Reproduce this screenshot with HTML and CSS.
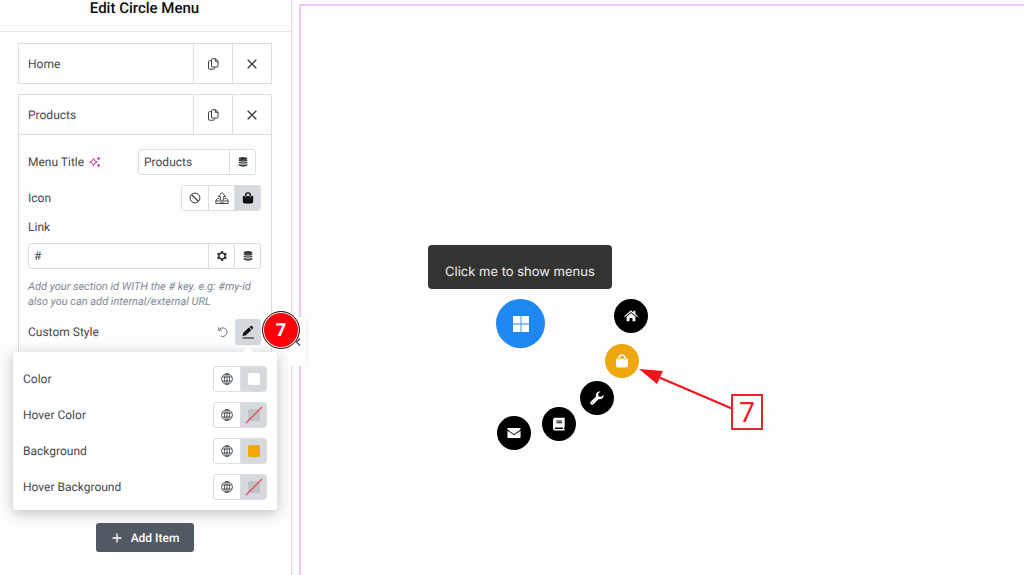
FILE: index.html
```html
<!DOCTYPE html>
<html lang="en">
<head>
<meta charset="utf-8">
<title>Edit Circle Menu</title>
<link rel="stylesheet" href="styles.css">
</head>
<body>
<svg class="defs" aria-hidden="true">
  <symbol id="copy" viewBox="0 0 12 12"><path d="M5.500.7h3L11 3v5a1 1 0 0 1-1 1H5.500a1 1 0 0 1-1-1V1.700a1 1 0 0 1 1-1zM8.300.8v2.500H11M4 2.700H2.500a1 1 0 0 0-1 1v6.500a1 1 0 0 0 1 1H6.500a1 1 0 0 0 1-1V9.400" fill="none" stroke="currentColor"/></symbol>
  <symbol id="close" viewBox="0 0 12 12"><path d="M1.700 1.700l8.600 8.600M10.300 1.700l-8.600 8.600" stroke="currentColor" stroke-width="1.400"/></symbol>
  <symbol id="database" viewBox="0 0 12 12"><ellipse cx="6" cy="2.400" rx="4.300" ry="1.500"/><path d="M1.700 3.500q4.300 1.500 8.600 0v1.400q-4.300 1.500-8.600 0zM1.700 5.700q4.300 1.500 8.600 0v1.400q-4.300 1.500-8.600 0zM1.700 7.900q4.300 1.500 8.600 0v1.700q-4.300 2.100-8.600 0z"/></symbol>
  <symbol id="gear" viewBox="0 0 12 12"><circle cx="6" cy="6" r="3" fill="none" stroke="currentColor" stroke-width="1.600"/><path d="M6 1v2M6 9v2M1.600 3.450l1.700 1M8.700 7.550l1.700 1M1.600 8.550l1.700-1M8.700 4.450l1.700-1" stroke="currentColor" stroke-width="2.200"/></symbol>
  <symbol id="globe" viewBox="0 0 12 12"><g fill="none" stroke="currentColor" stroke-width=".8"><circle cx="6" cy="6" r="5.400"/><ellipse cx="6" cy="6" rx="2.500" ry="5.400"/><path d="M6 .6v10.800M1.200 4h9.600M1.200 8h9.600"/></g></symbol>
  <symbol id="bag" viewBox="0 0 14 14"><path d="M4.200 5V3.800a2.800 2.800 0 0 1 5.600 0V5" fill="none" stroke="currentColor" stroke-width="1.600"/><path d="M1 4.700h2.600v1.500h1.200V4.700h4.400v1.500h1.200V4.700H13v6.800a2 2 0 0 1-2 2H3a2 2 0 0 1-2-2z"/></symbol>
</svg>
<div class="editor">
  <aside class="sidebar">
    <header class="header"><h1 class="title">Edit Circle Menu</h1></header>
    <div class="controls">
      <div class="item">
        <div class="item-bar">
          <button class="item-name">Home</button>
          <button class="item-tool" aria-label="Duplicate Home"><svg class="icon"><use href="#copy"/></svg></button>
          <button class="item-tool" aria-label="Remove Home"><svg class="icon"><use href="#close"/></svg></button>
        </div>
      </div>
      <div class="item">
        <div class="item-bar">
          <button class="item-name">Products</button>
          <button class="item-tool" aria-label="Duplicate Products"><svg class="icon"><use href="#copy"/></svg></button>
          <button class="item-tool" aria-label="Remove Products"><svg class="icon"><use href="#close"/></svg></button>
        </div>
        <div class="fields">
          <div class="row row-title">
            <label for="menu-title">Menu Title</label>
            <svg class="icon sparkle" viewBox="0 0 12 12"><path d="M4.500 2.300Q5.100 5.400 8.200 6 5.100 6.600 4.500 9.700 3.900 6.600.8 6 3.900 5.400 4.500 2.300z" fill="none" stroke="currentColor"/><path d="M9.600 1l.5 1.100 1.100.5-1.100.5-.5 1.100-.5-1.100L8 2.600l1.100-.5zM9.600 7.800l.5 1.100 1.100.5-1.100.5-.5 1.100-.5-1.100-1.100-.5 1.100-.5z" stroke="currentColor" stroke-width=".5"/></svg>
            <div class="group title-group">
              <input class="text" id="menu-title" type="text" value="Products">
              <button class="cell" aria-label="Dynamic title"><svg class="icon"><use href="#database"/></svg></button>
            </div>
          </div>
          <div class="row">
            <span>Icon</span>
            <div class="group push">
              <button class="cell" aria-label="No icon"><svg class="icon" viewBox="0 0 12 12"><path d="M2.500 2.500l7 7" stroke="currentColor" stroke-width="1.100"/><circle cx="6" cy="6" r="4.900" fill="none" stroke="currentColor"/></svg></button>
              <button class="cell" aria-label="Upload SVG"><svg class="icon icon-lg" viewBox="0 0 14 14"><path d="M5.300 9.300V5.500H3.400L7 1.500l3.600 4H8.700v3.800zM4.300 7.500H2.600L.9 9.200v3.300h12.200V9.200l-1.700-1.700H9.700M.9 9.900h3.400q.4 1.200 1.400 1.200h2.600q1 0 1.400-1.200h3.400" fill="none" stroke="currentColor" stroke-width=".9"/></svg></button>
              <button class="cell selected" aria-label="Icon library"><svg class="icon"><use href="#bag"/></svg></button>
            </div>
          </div>
          <label class="link-label" for="link">Link</label>
          <div class="group">
            <input class="text" id="link" type="text" value="#">
            <button class="cell" aria-label="Link options"><svg class="icon"><use href="#gear"/></svg></button>
            <button class="cell" aria-label="Dynamic link"><svg class="icon"><use href="#database"/></svg></button>
          </div>
          <p class="help">Add your section id WITH the # key. e.g: #my-id also you can add internal/external URL</p>
          <div class="row row-style">
            <span>Custom Style</span>
            <button class="reset" aria-label="Reset style"><svg class="icon" viewBox="0 0 12 12"><path d="M1.700 1.300v3h3M1.900 4.200A4.300 4.300 0 1 1 3.600 9.900" fill="none" stroke="currentColor"/></svg></button>
            <button class="edit" aria-label="Edit style"><svg class="icon icon-lg" viewBox="0 0 14 14"><path d="M1.500 11l.8-3.200L7.900 2.600l2.500 2.400-5.600 5.200zM8.600 1.900l.9-.8q.9-.6 1.600.1l.8.800q.7.700 0 1.500l-.9.8zM1.500 12.500h11.500v1H1.500z"/></svg></button>
            <span class="badge">7</span>
          </div>
          <div class="popover">
            <div class="row">
              <span>Color</span>
              <div class="group push"><button class="cell" aria-label="Global color"><svg class="icon"><use href="#globe"/></svg></button><button class="cell picker" aria-label="Pick color"><span class="swatch"></span></button></div>
            </div>
            <div class="row">
              <span>Hover Color</span>
              <div class="group push"><button class="cell" aria-label="Global hover color"><svg class="icon"><use href="#globe"/></svg></button><button class="cell picker" aria-label="Pick hover color"><svg class="unset" viewBox="0 0 20 20"><rect class="unset-box" x="4" y="4" width="12" height="12" rx="2"/><path class="unset-line" d="M2 18L18 2"/></svg></button></div>
            </div>
            <div class="row">
              <span>Background</span>
              <div class="group push"><button class="cell" aria-label="Global background"><svg class="icon"><use href="#globe"/></svg></button><button class="cell picker" aria-label="Pick background"><span class="swatch swatch-amber"></span></button></div>
            </div>
            <div class="row">
              <span>Hover Background</span>
              <div class="group push"><button class="cell" aria-label="Global hover background"><svg class="icon"><use href="#globe"/></svg></button><button class="cell picker" aria-label="Pick hover background"><svg class="unset" viewBox="0 0 20 20"><rect class="unset-box" x="4" y="4" width="12" height="12" rx="2"/><path class="unset-line" d="M2 18L18 2"/></svg></button></div>
            </div>
          </div>
        </div>
      </div>
      <button class="add"><svg class="icon" viewBox="0 0 12 12"><path d="M6 1.500v9M1.500 6h9" stroke="currentColor" stroke-width="1.300"/></svg>Add Item</button>
    </div>
    <button class="collapse" aria-label="Hide panel"><svg viewBox="0 0 6 10"><path d="M5 1.500L1.500 5 5 8.500" fill="none" stroke="currentColor" stroke-width="1.300"/></svg></button>
  </aside>
  <main class="canvas">
    <div class="tooltip" role="tooltip">Click me to show menus</div>
    <button class="node node-main" aria-label="Menu"><svg viewBox="0 0 16 16"><path d="M0 0h7.600v7.600H0zM8.400 0H16v7.600H8.400zM0 8.400h7.600V16H0zM8.400 8.400H16V16H8.400z"/></svg></button>
    <a class="node node-home" href="#" aria-label="Home"><svg viewBox="0 0 16 16"><path d="M8 1.500l2.800 2.400V2H13v3.800l2.800 2.400-.9 1L8 3.300 1.100 9.200l-.9-1z"/><path d="M8 4.500l5 4.300V14H9.700v-3.700H6.300V14H3V8.800z"/></svg></a>
    <a class="node node-bag" href="#" aria-label="Products"><svg><use href="#bag"/></svg></a>
    <a class="node node-wrench" href="#" aria-label="Services"><svg viewBox="0 0 16 16"><path d="M15.400 4.200a4.300 4.300 0 0 1-5.500 5L4 15.100A2 2 0 0 1 1 12.100L6.900 6.200A4.300 4.300 0 0 1 11.900.7L9.400 3.200l.4 3 3 .4z"/><circle class="hole" cx="2.500" cy="13.500" r=".6"/></svg></a>
    <a class="node node-book" href="#" aria-label="Blog"><svg viewBox="0 0 16 16"><path fill-rule="evenodd" d="M3.500.8h11v11l-.7.8v1.400l.7.300v1h-11a2.300 2.300 0 0 1-2.300-2.300V3.100A2.300 2.300 0 0 1 3.500.8zm1.500 3.200v1h6.500V4zm0 2v1h6.500V6zM3.800 12a.8.8 0 0 0 0 1.600h8.700V12z"/></svg></a>
    <a class="node node-mail" href="#" aria-label="Contact"><svg viewBox="0 0 16 16"><path d="M.5 4V3q0-.8.8-.8h13.400q.8 0 .8.800v1L8 9.300z"/><path d="M.5 5.300L8 10.700l7.500-5.400v7.500q0 .8-.8.800H1.300q-.8 0-.8-.8z"/></svg></a>
    <svg class="arrow" viewBox="0 0 96 46"><path d="M21 8.700L94 40" stroke="currentColor" stroke-width="2.200"/><path d="M0 0l24 2-6 13z"/></svg>
    <div class="marker">7</div>
  </main>
</div>
</body>
</html>
```
FILE: styles.css
```css
* { box-sizing: border-box; }
body {
  margin: 0;
  background: #fdfdfd;
  color: #45494f;
  font: 12px/16px Roboto, "Liberation Sans", sans-serif;
  text-rendering: geometricPrecision;
}
button, input { font: inherit; color: inherit; text-rendering: inherit; }
button {
  display: flex;
  align-items: center;
  justify-content: center;
  padding: 0;
  border: 0;
  background: none;
}
svg { display: block; fill: currentColor; }
.defs { position: absolute; width: 0; height: 0; }
.icon { flex: none; width: 12px; height: 12px; }
.icon-lg { width: 14px; height: 14px; }

.editor { display: flex; min-height: 100vh; overflow: hidden; }
.sidebar {
  position: relative;
  z-index: 1;
  flex: 0 0 292px;
  border-right: 1px solid #efd3f4;
}
.header { height: 32px; border-bottom: 1px solid #e6e8ea; }
.title {
  margin: 0;
  padding-right: 2px;
  color: #0c0d0e;
  font-size: 15px;
  font-weight: 500;
  line-height: 16px;
  text-align: center;
}
.controls {
  display: flex;
  flex-direction: column;
  gap: 10px;
  padding: 11px 19px 20px 18px;
}
.item { border: 1px solid #dcdee1; }
.item-bar { display: flex; height: 39px; }
.item-name { flex: 1; justify-content: flex-start; padding-left: 9px; }
.item-tool { width: 39px; border-left: 1px solid #dcdee1; color: #3b3f45; }
.fields {
  display: flex;
  flex-direction: column;
  gap: 10px;
  padding: 14px 10px 0 9px;
  border-top: 1px solid #dcdee1;
}
.row { display: flex; align-items: center; height: 26px; }
.push { margin-left: auto; }
.row-title { padding-right: 5px; }
.sparkle { margin-left: 5px; color: #c72bc9; }
.group {
  display: flex;
  height: 26px;
  border: 1px solid #dcdee1;
  border-radius: 3px;
  background: #fff;
  overflow: hidden;
}
.title-group { width: 118px; margin-left: auto; }
.text {
  flex: 1;
  min-width: 0;
  padding: 0 5px;
  border: 0;
  background: transparent;
}
.cell { width: 26px; color: #33373d; }
.cell + .cell, .text + .cell { border-left: 1px solid #dcdee1; }
.selected, .picker { background: #d5d8dc; color: #0c0d0e; }
.link-label { line-height: 12px; }
.help {
  margin: 0;
  color: #818a96;
  font-size: 11px;
  font-style: italic;
  line-height: 15px;
}
.row-style { position: relative; }
.reset { margin-left: auto; color: #69727d; }
.edit {
  width: 26px;
  height: 26px;
  margin-left: 6px;
  border-radius: 3px;
  background: #d5d8dc;
  color: #0c0d0e;
}
.badge {
  position: absolute;
  z-index: 3;
  top: -8px;
  right: -39px;
  width: 38px;
  height: 38px;
  border: 1px solid #222;
  border-radius: 50%;
  background: #fb0009;
  box-shadow: inset 0 0 0 1px #fff;
  color: #fff;
  font: 700 18px/36px "Noto Sans", sans-serif;
  text-align: center;
}
.popover {
  position: relative;
  z-index: 2;
  display: flex;
  flex-direction: column;
  gap: 10px;
  margin: -3px -16px -9px -15px;
  padding: 14px 10px 10px;
  border-radius: 3px;
  background: #fff;
  box-shadow: 0 3px 14px rgba(0, 0, 0, .25);
}
.popover::before {
  content: "";
  position: absolute;
  top: -6px;
  right: 22px;
  border: 7px solid transparent;
  border-top: 0;
  border-bottom-color: #fff;
}
.swatch { width: 12px; height: 12px; border-radius: 2px; background: #fff; }
.swatch-amber { background: #f4a807; }
.unset { width: 20px; height: 20px; }
.unset-box { fill: #bfc1c5; }
.unset-line { stroke: #df5267; stroke-width: 1.5; }
.add {
  align-self: center;
  gap: 8px;
  height: 29px;
  margin-top: 11px;
  padding: 0 15px;
  border-radius: 3px;
  background: #515962;
  color: #fff;
  font-weight: 500;
}
.collapse {
  position: absolute;
  top: 317px;
  right: -15px;
  width: 17px;
  height: 49px;
  border-radius: 0 3px 3px 0;
  background: #fdfdfd;
  box-shadow: 2px 0 3px rgba(0, 0, 0, .04);
}
.collapse svg { width: 6px; height: 10px; }

.canvas {
  position: relative;
  flex: 1;
  margin: 4px 0 0 7px;
  border: solid #efc9f3;
  border-width: 2px 0 0 2px;
}
.tooltip {
  position: absolute;
  top: 239px;
  left: 127px;
  padding: 17px;
  padding-bottom: 7px;
  border-radius: 4px;
  background: #333;
  color: #eee;
  font: 13px/20px Inter, sans-serif;
  white-space: nowrap;
}
.node {
  position: absolute;
  display: flex;
  align-items: center;
  justify-content: center;
  width: 34px;
  height: 34px;
  border-radius: 50%;
  background: #000;
  color: #fff;
}
.node svg { width: 14px; height: 14px; }
.node-main { top: 293px; left: 195px; width: 49px; height: 49px; background: #1e87f0; }
.node-main svg { width: 16px; height: 16px; }
.node-home { top: 293px; left: 313px; }
.node-bag { top: 338px; left: 304px; background: #eea70d; }
.node-wrench { top: 375px; left: 279px; }
.node-book { top: 401px; left: 241px; }
.node-mail { top: 410px; left: 196px; }
.hole { fill: #000; }
.arrow { position: absolute; top: 363px; left: 338px; width: 96px; height: 46px; color: #f5141c; }
.marker {
  position: absolute;
  top: 388px;
  left: 430px;
  width: 32px;
  height: 36px;
  border: 2px solid #e3262c;
  color: #e3262c;
  font: 28px/32px "Noto Sans", sans-serif;
  text-align: center;
}
```
